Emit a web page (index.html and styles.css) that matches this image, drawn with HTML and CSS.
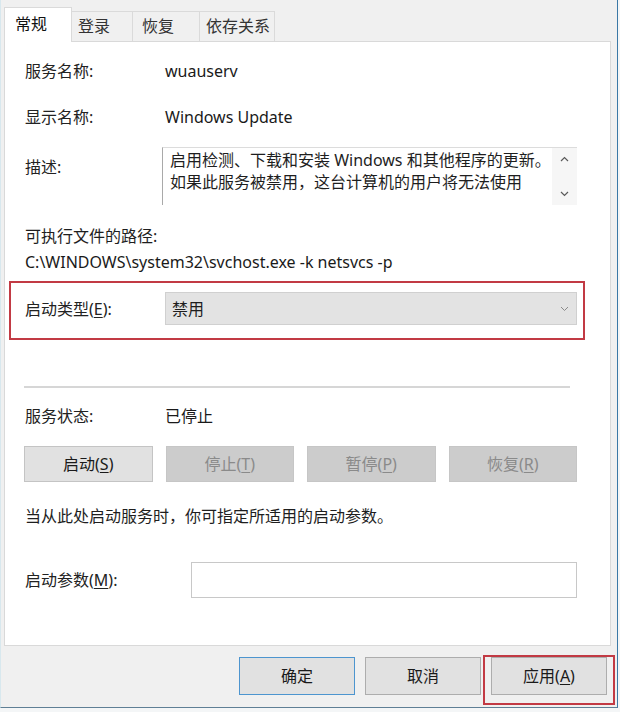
FILE: index.html
```html
<!DOCTYPE html>
<html lang="zh-CN">
<head>
    <meta charset="UTF-8">
    <meta name="viewport" content="width=device-width, initial-scale=1.0">
    <title>Windows Update 的属性</title>
    <link rel="stylesheet" href="styles.css">
</head>
<body>
    <div class="window">
        <!-- Tab strip -->
        <div class="tabs">
            <div class="tab active">常规</div>
            <div class="tab tab-login">登录</div>
            <div class="tab tab-recover">恢复</div>
            <div class="tab tab-deps">依存关系</div>
        </div>

        <div class="panel">
            <div class="row row-name">
                <span class="label">服务名称:</span>
                <span class="value">wuauserv</span>
            </div>
            <div class="row row-display">
                <span class="label">显示名称:</span>
                <span class="value">Windows Update</span>
            </div>
            <div class="row row-desc">
                <span class="label desc-label">描述:</span>
                <div class="desc-box">
                    <div class="desc-text">启用检测、下载和安装 Windows 和其他程序的更新。<br>如果此服务被禁用，这台计算机的用户将无法使用</div>
                    <div class="desc-scroll">
                        <svg width="9" height="6" viewBox="0 0 9 6"><path d="M1 5 L4.5 1.5 L8 5" fill="none" stroke="#5a5a5a" stroke-width="1.2"/></svg>
                        <svg width="9" height="6" viewBox="0 0 9 6"><path d="M1 1 L4.5 4.5 L8 1" fill="none" stroke="#5a5a5a" stroke-width="1.2"/></svg>
                    </div>
                </div>
            </div>

            <div class="path-label">可执行文件的路径:</div>
            <div class="path">C:\WINDOWS\system32\svchost.exe -k netsvcs -p</div>

            <!-- Highlighted startup type -->
            <div class="type-row">
                <span class="label">启动类型(<u>E</u>):</span>
                <div class="select">
                    <span>禁用</span>
                    <svg width="9" height="6" viewBox="0 0 9 6"><path d="M1 1 L4.5 4.5 L8 1" fill="none" stroke="#8a8a8a" stroke-width="1"/></svg>
                </div>
            </div>

            <div class="separator"></div>

            <div class="row row-status">
                <span class="label">服务状态:</span>
                <span class="value">已停止</span>
            </div>

            <div class="svc-buttons">
                <div class="btn">启动(<u>S</u>)</div>
                <div class="btn disabled">停止(<u>T</u>)</div>
                <div class="btn disabled">暂停(<u>P</u>)</div>
                <div class="btn disabled">恢复(<u>R</u>)</div>
            </div>

            <div class="hint">当从此处启动服务时，你可指定所适用的启动参数。</div>

            <div class="param-row">
                <span class="label param-label">启动参数(<u>M</u>):</span>
                <div class="param-input"></div>
            </div>
        </div>

        <!-- Dialog buttons -->
        <div class="footer">
            <div class="btn dlg-btn default">确定</div>
            <div class="btn dlg-btn">取消</div>
            <div class="apply-wrap">
                <div class="btn dlg-btn">应用(<u>A</u>)</div>
            </div>
        </div>
    </div>
</body>
</html>
```

FILE: styles.css
```css
body {
    margin: 0;
    padding: 0;
    background-color: #f4f6f7;
    font-family: "Noto Sans", "Noto Sans CJK SC", sans-serif;
    font-size: 16px;
    line-height: 20px;
    color: #1e1e1e;
}

u {
    text-decoration-thickness: 1px;
    text-underline-offset: 2px;
}

.window {
    width: 618px;
    height: 708px;
    box-sizing: border-box;
    background-color: #f0f0f0;
    border-left: 1px solid #d8e8ee;
    border-right: 1px solid #3a78a6;
    border-bottom: 1px solid #5f7f95;
    display: flex;
    flex-direction: column;
}

/* Tabs */
.tabs {
    display: flex;
    align-items: flex-end;
    height: 42px;
    margin-left: 3px;
    width: 607px;
    box-sizing: border-box;
    border-bottom: 1px solid #d9d9d9;
}

.tab {
    height: 30px;
    box-sizing: border-box;
    padding-left: 6px;
    line-height: 29px;
    background-color: #f0f0f0;
    border: 1px solid #dadada;
    border-bottom: none;
    margin-left: -1px;
    color: #333;
}

.tab.active {
    height: 35px;
    width: 68px;
    padding-left: 10px;
    line-height: 33px;
    margin-left: 0;
    margin-bottom: -1px;
    background-color: #fff;
    color: #111;
}

.tab-login { width: 62px; }
.tab-recover { width: 68px; padding-left: 9px; }
.tab-deps { width: 76px; }

/* Main panel */
.panel {
    margin-left: 3px;
    width: 607px;
    height: 604px;
    box-sizing: border-box;
    background-color: #fff;
    border: 1px solid #d9d9d9;
    border-top: none;
    padding: 19px 33px 0 20px;
}

.row {
    display: flex;
    align-items: center;
}

.label {
    width: 140px;
    flex-shrink: 0;
    color: #222;
}

.value {
    color: #1a1a1a;
}

.row-display { margin-top: 26px; }

.row-desc {
    margin-top: 20px;
    align-items: flex-start;
}

.desc-label {
    width: 137px;
    padding-top: 10px;
}

.desc-box {
    flex: 1;
    height: 58px;
    box-sizing: border-box;
    border-top: 1px solid #dcdcdc;
    border-left: 1px solid #a9a9a9;
    display: flex;
}

.desc-text {
    flex: 1;
    padding: 1px 0 0 7px;
    line-height: 22px;
    color: #1e1e1e;
    white-space: nowrap;
}

.desc-scroll {
    width: 25px;
    background-color: #f6f6f6;
    display: flex;
    flex-direction: column;
    align-items: center;
    justify-content: space-between;
    padding: 8px 0 8px;
    box-sizing: border-box;
}

.path-label {
    margin-top: 18px;
    line-height: 26px;
}

.path {
    line-height: 26px;
    color: #1a1a1a;
}

/* Red highlighted startup type row */
.type-row {
    margin: 6px -8px 0 -16px;
    border: 2px solid #c23a44;
    padding: 9px 6px 13px 14px;
    display: flex;
    align-items: center;
}

.select {
    flex: 1;
    height: 33px;
    box-sizing: border-box;
    background-color: #e3e3e3;
    border: 1px solid #d0d0d0;
    display: flex;
    align-items: center;
    justify-content: space-between;
    padding: 0 7px 0 6px;
}

.separator {
    margin: 46px 7px 0 -1px;
    height: 2px;
    background-color: #d6d6d6;
}

.row-status { margin-top: 18px; }

.svc-buttons {
    margin-top: 20px;
    margin-left: -1px;
    display: grid;
    grid-template-columns: repeat(4, 1fr);
    column-gap: 13px;
}

.btn {
    height: 36px;
    box-sizing: border-box;
    background-color: #e1e1e1;
    border: 1px solid #c4c4c4;
    display: flex;
    align-items: center;
    justify-content: center;
    color: #1a1a1a;
}

.btn.disabled {
    background-color: #cccccc;
    border-color: #c6c6c6;
    color: #8a8a8a;
}

.hint {
    margin-top: 24px;
}

.param-row {
    margin-top: 36px;
    display: flex;
    align-items: center;
}

.param-label { width: 166px; }

.param-input {
    flex: 1;
    height: 36px;
    box-sizing: border-box;
    border: 1px solid #c8c8c8;
    background-color: #fff;
}

/* Footer */
.footer {
    flex: 1;
    display: flex;
    justify-content: flex-end;
    align-items: flex-start;
    padding: 9px 2px 0 0;
}

.dlg-btn {
    width: 116px;
    height: 38px;
    border-color: #adadad;
    margin-top: 2px;
}

.dlg-btn.default {
    border-color: #4d95cf;
    margin-right: 10px;
}

.apply-wrap {
    margin-left: 2px;
    border: 2px solid #c23a44;
    padding: 0 6px 8px 6px;
}

.apply-wrap .dlg-btn {
    margin-top: 0;
}
```
